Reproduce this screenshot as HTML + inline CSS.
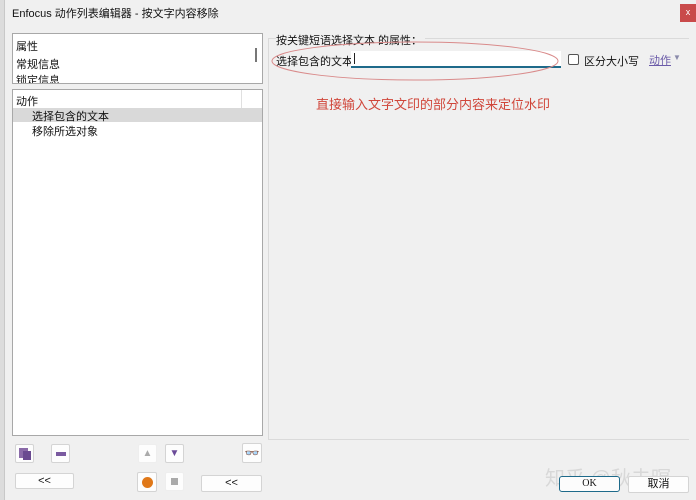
<!DOCTYPE html>
<html><head><meta charset="utf-8"><style>
*{margin:0;padding:0;box-sizing:border-box}
body{width:696px;height:500px;background:#f0f0f0;font-family:"Liberation Sans","Noto Sans CJK SC",sans-serif;font-size:11px;color:#111;position:relative;overflow:hidden}
.a{position:absolute}
.box{background:#fff;border:1px solid #a8a8a8}
.btn{background:#fdfdfd;border:1px solid #d4d4d4;border-radius:2px;text-align:center}
</style></head><body>
<div class="a" style="left:0;top:0;width:5px;height:500px;background:#dcdcdc;border-right:1px solid #c8c8c8"></div>
<div class="a" style="left:12px;top:5px;font-size:11px">Enfocus 动作列表编辑器 - 按文字内容移除</div>
<div class="a" style="left:680px;top:4px;width:16px;height:18px;background:#c94a4a;color:#fff;font-size:9px;text-align:center;line-height:17px">x</div>

<div class="a box" style="left:12px;top:33px;width:251px;height:51px;overflow:hidden">
 <div class="a" style="left:3px;top:4px">属性</div>
 <div class="a" style="left:3px;top:22px">常规信息</div>
 <div class="a" style="left:3px;top:38px">锁定信息</div>
 <div class="a" style="left:242px;top:14px;width:2px;height:14px;background:#777"></div>
</div>
<div class="a box" style="left:12px;top:89px;width:251px;height:347px">
 <div class="a" style="left:3px;top:3px">动作</div>
 <div class="a" style="left:228px;top:0;width:1px;height:18px;background:#e0e0e0"></div>
 <div class="a" style="left:0;top:18px;width:249px;height:14px;background:#d9d9d9"></div>
 <div class="a" style="left:19px;top:18px">选择包含的文本</div>
 <div class="a" style="left:19px;top:33px">移除所选对象</div>
</div>

<div class="a" style="left:268px;top:38px;width:421px;height:402px;border:1px solid #dadada;border-right:none"></div>
<div class="a" style="left:276px;top:32px;background:#f0f0f0;padding-right:3px">按关键短语选择文本 的属性：</div>
<div class="a" style="left:276px;top:53px">选择包含的文本</div>
<div class="a" style="left:351px;top:51px;width:210px;height:17px;background:#fff;border-bottom:2px solid #1e6a8a"></div>
<div class="a" style="left:354px;top:53px;width:1px;height:11px;background:#222"></div>
<svg class="a" style="left:270px;top:40px" width="300" height="42"><ellipse cx="145" cy="21" rx="143" ry="19" fill="none" stroke="#d98a8a" stroke-width="1"/></svg>
<div class="a" style="left:568px;top:54px;width:11px;height:11px;border:1px solid #555;background:#fff;border-radius:2px"></div>
<div class="a" style="left:584px;top:53px">区分大小写</div>
<div class="a" style="left:649px;top:52px;color:#6a5aa8;text-decoration:underline">动作</div>
<div class="a" style="left:673px;top:53px;color:#8a8aaa;font-size:8px">▼</div>
<div class="a" style="left:316px;top:94px;color:#d0463a;font-size:13px">直接输入文字文印的部分内容来定位水印</div>

<div class="a btn" style="left:15px;top:444px;width:19px;height:19px"><div class="a" style="left:3px;top:3px;width:9px;height:10px;background:#8a6aa8"></div><div class="a" style="left:7px;top:6px;width:8px;height:9px;background:#6a4a90"></div></div>
<div class="a btn" style="left:51px;top:444px;width:19px;height:19px"><div class="a" style="left:4px;top:7px;width:10px;height:4px;background:#7a5aa0"></div></div>
<div class="a btn" style="left:138px;top:444px;width:19px;height:19px;border-color:#eee;color:#aaa;font-size:10px;line-height:18px">▲</div>
<div class="a btn" style="left:165px;top:444px;width:19px;height:19px;color:#6a4a98;font-size:10px;line-height:18px">▼</div>
<div class="a btn" style="left:242px;top:443px;width:20px;height:20px;font-size:12px;line-height:18px;color:#444">👓</div>
<div class="a btn" style="left:15px;top:473px;width:59px;height:16px;line-height:14px">&lt;&lt;</div>
<div class="a btn" style="left:137px;top:472px;width:20px;height:20px"><div class="a" style="left:4px;top:4px;width:11px;height:11px;border-radius:50%;background:#e07818"></div></div>
<div class="a btn" style="left:165px;top:472px;width:19px;height:19px;border-color:#eee"><div class="a" style="left:5px;top:5px;width:7px;height:7px;background:#aaa"></div></div>
<div class="a btn" style="left:201px;top:475px;width:61px;height:17px;line-height:15px">&lt;&lt;</div>

<div class="a" style="left:545px;top:462px;font-size:20px;color:#d8d8d8">知乎 @秋未暝</div>
<div class="a btn" style="left:559px;top:476px;width:61px;height:16px;border:1px solid #1e6a8a;border-radius:3px;line-height:14px;font-family:'Liberation Serif',serif;font-size:10px;background:#fcfcfc">OK</div>
<div class="a btn" style="left:628px;top:476px;width:61px;height:17px;line-height:15px">取消</div>
</body></html>
